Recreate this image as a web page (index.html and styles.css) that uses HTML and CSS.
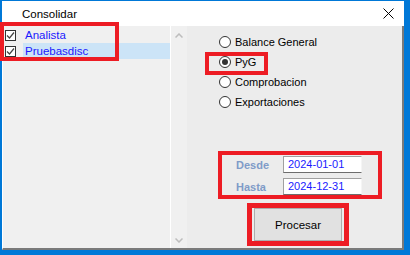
FILE: index.html
```html
<!DOCTYPE html>
<html lang="es">
<head>
  <meta charset="UTF-8">
  <title>Consolidar</title>
  <link rel="stylesheet" href="styles.css">
</head>
<body>

  <div class="screen">
    <div class="window">
      <div class="titlebar">
        <span class="title">Consolidar</span>
        <svg class="close" width="11" height="11" viewBox="0 0 11 11">
          <path d="M0.5 0.5 L10.5 10.5 M10.5 0.5 L0.5 10.5" stroke="#000" stroke-width="1" fill="none"/>
        </svg>
      </div>

      <div class="client">
        <div class="list">
          <div class="item">
            <span class="check">
              <svg width="9" height="9" viewBox="0 0 9 9"><path d="M1 4.5 L3.5 7 L8 1.5" stroke="#444" stroke-width="1.2" fill="none"/></svg>
            </span>
            <span class="item-label">Analista</span>
          </div>
          <div class="item selected">
            <span class="check">
              <svg width="9" height="9" viewBox="0 0 9 9"><path d="M1 4.5 L3.5 7 L8 1.5" stroke="#444" stroke-width="1.2" fill="none"/></svg>
            </span>
            <span class="item-label">Pruebasdisc</span>
          </div>
        </div>

        <div class="scrollbar">
          <svg width="8" height="5" viewBox="0 0 8 5"><path d="M0.5 4.5 L4 1 L7.5 4.5" stroke="#bdbdbd" stroke-width="1.5" fill="none"/></svg>
          <svg width="8" height="5" viewBox="0 0 8 5"><path d="M0.5 0.5 L4 4 L7.5 0.5" stroke="#bdbdbd" stroke-width="1.5" fill="none"/></svg>
        </div>

        <div class="panel">
          <div class="options">
            <div class="option"><span class="radio"></span>Balance General</div>
            <div class="option"><span class="radio checked"></span>PyG</div>
            <div class="option"><span class="radio"></span>Comprobacion</div>
            <div class="option"><span class="radio"></span>Exportaciones</div>
          </div>

          <div class="dates">
            <div class="date-row">
              <span class="date-label">Desde</span>
              <span class="date-input">2024-01-01</span>
            </div>
            <div class="date-row">
              <span class="date-label">Hasta</span>
              <span class="date-input">2024-12-31</span>
            </div>
          </div>

          <button class="process">Procesar</button>
        </div>
      </div>
    </div>

    <!-- red highlight frames -->
    <div class="mark mark-list"></div>
    <div class="mark mark-pyg"></div>
    <div class="mark mark-dates"></div>
    <div class="mark mark-button"></div>
  </div>

</body>
</html>
```

FILE: styles.css
```css
body {
  margin: 0;
  background-color: #0078d7;
  font-family: "Liberation Sans", Arial, sans-serif;
  font-size: 11px;
}

.screen {
  position: relative;
  width: 410px;
  height: 255px;
  padding: 1px 6px 5px 2px;
  box-sizing: border-box;
  overflow: hidden;
}

.window {
  width: 402px;
  height: 249px;
  display: flex;
  flex-direction: column;
}

.titlebar {
  height: 25px;
  background-color: #fff;
  display: flex;
  align-items: center;
  padding-left: 20px;
}

.title {
  font-size: 11.5px;
  color: #000;
}

.close {
  margin-left: auto;
  margin-right: 10px;
}

.client {
  flex: 1;
  display: flex;
  background-color: #ececec;
  border-left: 1px solid #fff;
  border-right: 2px solid #7a7a7a;
  border-bottom: 2px solid #7a7a7a;
}

.list {
  width: 167px;
  background-color: #f0f0f0;
  border-right: 1px solid #fff;
  padding-top: 1px;
}

.item {
  height: 16px;
  display: flex;
  align-items: center;
}

.check {
  width: 11px;
  height: 11px;
  margin-left: 2px;
  border: 1px solid #333;
  box-sizing: border-box;
  background-color: #fff;
  display: flex;
  align-items: center;
  justify-content: center;
}

.item-label {
  flex: 1;
  height: 16px;
  line-height: 16px;
  margin-left: 7px;
  padding-left: 2px;
  color: #1a1aff;
  font-size: 11.5px;
}

.item.selected .item-label {
  background-color: #cce4f7;
}

.scrollbar {
  width: 16px;
  background-color: #f0f0f0;
  display: flex;
  flex-direction: column;
  justify-content: space-between;
  align-items: center;
  padding: 7px 0 5px;
  box-sizing: border-box;
}

.panel {
  flex: 1;
  padding-top: 6px;
}

.options {
  padding-left: 32px;
}

.option {
  height: 20px;
  display: flex;
  align-items: center;
  color: #000;
}

.radio {
  width: 12px;
  height: 12px;
  border: 1px solid #333;
  border-radius: 50%;
  box-sizing: border-box;
  background-color: #fff;
  margin-right: 4px;
  display: flex;
  align-items: center;
  justify-content: center;
}

.radio.checked::after {
  content: "";
  width: 6px;
  height: 6px;
  border-radius: 50%;
  background-color: #333;
}

.dates {
  margin-top: 44px;
  display: flex;
  flex-direction: column;
  gap: 5px;
}

.date-row {
  display: flex;
  align-items: center;
  height: 17px;
}

.date-label {
  width: 47px;
  padding-left: 49px;
  font-weight: bold;
  color: #7f9bc8;
}

.date-input {
  width: 79px;
  height: 17px;
  line-height: 15px;
  box-sizing: border-box;
  background-color: #fff;
  border: 1px solid #a0a0a0;
  border-right-color: #f5f5f5;
  border-bottom-color: #6d6d6d;
  padding-left: 4px;
  color: #1a1aff;
}

.process {
  display: block;
  margin: 13px 0 0 67px;
  width: 88px;
  height: 33px;
  background-color: #e1e1e1;
  border: 1px solid #adadad;
  font-family: "Liberation Sans", Arial, sans-serif;
  font-size: 11.5px;
  color: #000;
  padding: 0;
}

.mark {
  position: absolute;
  border: 4px solid #ed1c24;
  box-sizing: border-box;
}

.mark-list {
  left: 0;
  top: 22px;
  width: 119px;
  height: 39px;
}

.mark-pyg {
  left: 205px;
  top: 52px;
  width: 63px;
  height: 23px;
}

.mark-dates {
  left: 218px;
  top: 151px;
  width: 164px;
  height: 48px;
}

.mark-button {
  left: 247px;
  top: 203px;
  width: 102px;
  height: 43px;
  border-width: 5px;
}
```
